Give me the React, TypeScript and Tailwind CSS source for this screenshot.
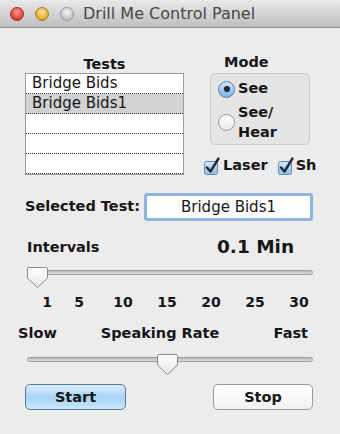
import React from 'react';

const font = { fontFamily: '"DejaVu Sans", "Liberation Sans", sans-serif' };

const TrafficLight = ({ from, to, ring }: { from: string; to: string; ring: string }) => (
  <div
    className="w-[14px] h-[14px] rounded-full border"
    style={{ background: `radial-gradient(circle at 50% 35%, ${from}, ${to} 75%)`, borderColor: ring }}
  />
);

const Thumb = () => (
  <svg width="23" height="23" viewBox="0 0 23 23">
    <defs>
      <linearGradient id="tg" x1="0" y1="0" x2="0" y2="1">
        <stop offset="0" stopColor="#ffffff" />
        <stop offset="1" stopColor="#e6e6e6" />
      </linearGradient>
    </defs>
    <path d="M3 1.5 H20 Q21.5 1.5 21.5 3 V12 L11.5 21.5 L1.5 12 V3 Q1.5 1.5 3 1.5 Z" fill="url(#tg)" stroke="#8a8a8a" strokeWidth="1" />
  </svg>
);

const Slider = ({ left }: { left: number }) => (
  <div className="relative h-[22px] mx-[27px]">
    <div className="absolute left-0 right-0 top-[3px] h-[5px] rounded-full border border-[#9c9c9c] bg-gradient-to-b from-[#b8b8b8] to-[#dedede]" />
    <div className="absolute top-[-1px]" style={{ left }}>
      <Thumb />
    </div>
  </div>
);

const Check = () => (
  <svg width="17" height="18" viewBox="0 0 17 18">
    <defs>
      <linearGradient id="cg" x1="0" y1="0" x2="0" y2="1">
        <stop offset="0" stopColor="#d6e8f8" />
        <stop offset="1" stopColor="#8dbde9" />
      </linearGradient>
    </defs>
    <rect x="1.5" y="4.5" width="13" height="13" rx="2" fill="url(#cg)" stroke="#6a86a6" />
    <path d="M4 10.5 L7.5 14.5 L15.5 1.5" fill="none" stroke="#1f2a3a" strokeWidth="2.4" strokeLinecap="round" strokeLinejoin="round" />
  </svg>
);

export default function App() {
  return (
    <div className="w-[340px] h-[434px] bg-[#ececec] text-[#161616] overflow-hidden" style={font}>
      {/* Title bar */}
      <div className="h-[28px] flex items-center pl-[10px] bg-gradient-to-b from-[#e9e9e9] to-[#bfbfbf] border-b border-[#8a8a8a] rounded-t-[5px]">
        <div className="flex gap-[11px]">
          <TrafficLight from="#ff9a8f" to="#d8362b" ring="#a3281f" />
          <TrafficLight from="#ffe59a" to="#dba324" ring="#a57a1b" />
          <TrafficLight from="#f6f6f6" to="#bdbdbd" ring="#9a9a9a" />
        </div>
        <span className="ml-[9px] text-[16px] text-[#474747]">Drill Me Control Panel</span>
      </div>

      {/* Tests + Mode */}
      <div className="flex pl-[25px] pt-[28px]">
        <div className="w-[159px]">
          <div className="text-center text-[14.5px] font-bold leading-[18px] -mt-[1px]">Tests</div>
          <div className="border border-[#9d9d9d] bg-white">
            {['Bridge Bids', 'Bridge Bids1', '', '', ''].map((t, i) => (
              <div
                key={i}
                className={`h-[20px] px-[6px] text-[15px] leading-[19px] border-b border-dotted border-[#333] ${i === 1 ? 'bg-[#d2d2d2]' : ''}`}
              >
                {t}
              </div>
            ))}
          </div>
        </div>

        <div className="ml-[19px] w-[137px]">
          <div className="pl-[21px] text-[14.5px] font-bold leading-[18px] -mt-[3px]">Mode</div>
          <div className="ml-[7px] w-[100px] h-[72px] mt-[2px] rounded-[5px] border border-[#c9c9c9] bg-[#e4e4e4] pl-[7px] pt-[6px]">
            <div className="flex items-center h-[18px]">
              <div className="w-[17px] h-[17px] rounded-full border border-[#5b7ea6] bg-gradient-to-b from-[#cfe5fa] to-[#79b1e6] flex items-center justify-center">
                <div className="w-[6px] h-[6px] rounded-full bg-[#1c2533]" />
              </div>
              <span className="ml-[3px] text-[14.5px] font-bold">See</span>
            </div>
            <div className="flex items-center mt-[4px]">
              <div className="w-[17px] h-[17px] rounded-full border border-[#9a9a9a] bg-gradient-to-b from-[#fdfdfd] to-[#e9e9e9]" />
              <span className="ml-[3px] text-[14.5px] font-bold leading-[20px]">
                See/
                <br />
                Hear
              </span>
            </div>
          </div>
          <div className="flex items-center h-[21px] mt-[10px]">
            <Check />
            <span className="ml-[3px] text-[14.5px] font-bold">Laser</span>
            <span className="ml-[9px]">
              <Check />
            </span>
            <span className="ml-[2px] text-[14.5px] font-bold">Sh</span>
          </div>
        </div>
      </div>

      {/* Selected Test */}
      <div className="flex items-center pl-[25px] mt-[17px]">
        <span className="text-[14.5px] font-bold w-[119px]">Selected Test:</span>
        <div className="w-[169px] h-[28px] rounded-[3px] bg-white border-[3px] border-[#8fb6e3] flex items-center justify-center text-[15px]">
          Bridge Bids1
        </div>
      </div>

      {/* Intervals */}
      <div className="flex items-center pl-[27px] mt-[14px] h-[24px]">
        <span className="text-[14.5px] font-bold w-[190px] leading-[18px]">Intervals</span>
        <span className="text-[18.5px] font-bold leading-[22px]">0.1 Min</span>
      </div>

      <div className="mt-[8px]">
        <Slider left={-1} />
      </div>

      <div className="flex pl-[37px] mt-[5px] text-[14px] font-bold leading-[16px]">
        <span className="w-[20px] text-center">1</span>
        <div className="flex gap-[24px] ml-[12px]">
          {['5', '10', '15', '20', '25', '30'].map((n) => (
            <span key={n} className="w-[20px] text-center">{n}</span>
          ))}
        </div>
      </div>

      <div className="flex items-center mt-[14px] text-[14.5px] font-bold leading-[18px]">
        <span className="ml-[18px]">Slow</span>
        <span className="ml-[44px]">Speaking Rate</span>
        <span className="ml-auto mr-[32px]">Fast</span>
      </div>

      <div className="mt-[12px]">
        <Slider left={129} />
      </div>

      {/* Buttons */}
      <div className="flex justify-between pl-[25px] pr-[27px] mt-[8px]">
        <button className="w-[101px] h-[26px] rounded-[5px] border border-[#5777a0] bg-gradient-to-b from-[#dcedfc] via-[#a9d3f6] to-[#cbe7fd] text-[14.5px] font-bold leading-[18px] text-[#161616]">
          Start
        </button>
        <button className="w-[100px] h-[26px] rounded-[5px] border border-[#9a9a9a] bg-gradient-to-b from-[#ffffff] to-[#f1f1f1] text-[14.5px] font-bold leading-[18px] text-[#161616]">
          Stop
        </button>
      </div>
    </div>
  );
}
